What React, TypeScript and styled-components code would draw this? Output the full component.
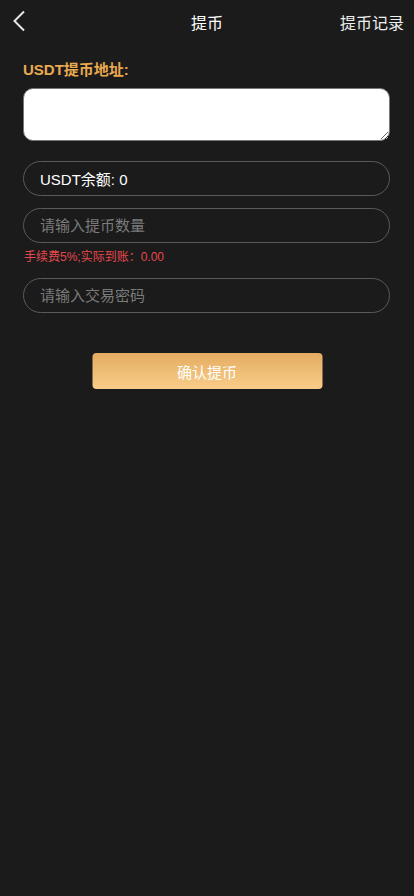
import React, { useState } from 'react';
import styled, { createGlobalStyle } from 'styled-components';

const GlobalStyle = createGlobalStyle`
  html, body {
    margin: 0;
    padding: 0;
    background-color: #1b1b1b;
  }
  body {
    font-family: "Liberation Sans", Arial, "Noto Sans CJK SC", sans-serif;
  }
  * {
    box-sizing: border-box;
  }
`;

const App = () => {
  const [amount, setAmount] = useState('');
  const fee = amount ? (Number(amount) * 0.95).toFixed(2) : '0.00';

  return (
    <Wrapper>
      <GlobalStyle />
      <Header>
        <BackBtn>
          <svg width="14" height="22" viewBox="0 0 14 22">
            <path d="M12 1.5 L2.5 11 L12 20.5" fill="none" stroke="#e6e6e6" strokeWidth="2" />
          </svg>
        </BackBtn>
        <Title>提币</Title>
        <Record>提币记录</Record>
      </Header>

      <Content>
        <Label>USDT提币地址:</Label>
        <Address />

        <Pill>
          <span>USDT余额: 0</span>
        </Pill>
        <InputPill
          placeholder="请输入提币数量"
          value={amount}
          onChange={(e) => setAmount(e.target.value)}
        />
        <FeeText>手续费5%;实际到账：{fee}</FeeText>
        <InputPill type="password" placeholder="请输入交易密码" />

        <SubmitBtn>确认提币</SubmitBtn>
      </Content>
    </Wrapper>
  );
};

const Wrapper = styled.div`
  width: 100%;
  min-height: 896px;
  background-color: #1b1b1b;
  color: #fff;
`;

const Header = styled.div`
  height: 44px;
  display: flex;
  align-items: center;
  justify-content: space-between;
  position: relative;
  padding: 0 10px 0 12px;
`;

const BackBtn = styled.div`
  width: 20px;
  height: 24px;
  display: flex;
  align-items: center;
  margin-top: -2px;
`;

const Title = styled.div`
  position: absolute;
  left: 50%;
  transform: translateX(-50%);
  font-size: 16px;
  color: #fff;
`;

const Record = styled.div`
  font-size: 16px;
  color: #eee;
`;

const Content = styled.div`
  padding: 16px 24px 0 23px;
  display: flex;
  flex-direction: column;
`;

const Label = styled.div`
  font-size: 15px;
  font-weight: bold;
  color: #e9a94f;
  line-height: 20px;
`;

const Address = styled.textarea`
  margin-top: 8px;
  width: 100%;
  height: 53px;
  border-radius: 10px;
  border: 1px solid #777;
  background: #fff;
  outline: none;
  padding: 8px 12px;
  font-size: 14px;
  font-family: inherit;
`;

const Pill = styled.div`
  margin-top: 20px;
  height: 35px;
  border: 1px solid #5a5a5a;
  border-radius: 18px;
  display: flex;
  align-items: center;
  padding: 0 16px;
  font-size: 15px;
  color: #fff;
`;

const InputPill = styled.input`
  margin-top: 12px;
  height: 35px;
  width: 100%;
  border: 1px solid #5a5a5a;
  border-radius: 18px;
  background: transparent;
  padding: 0 16px;
  font-size: 15px;
  color: #fff;
  outline: none;
  font-family: inherit;

  &::placeholder {
    color: #7a7a7a;
  }
`;

const FeeText = styled.div`
  margin-top: 7px;
  margin-bottom: 2px;
  padding-left: 1px;
  font-size: 12px;
  line-height: 14px;
  color: #e5484d;
`;

const SubmitBtn = styled.button`
  margin: 40px auto 0;
  width: 230px;
  height: 36px;
  border: none;
  border-radius: 4px;
  background: linear-gradient(180deg, #e4ac60 0%, #f9cd8a 100%);
  color: #fff;
  font-size: 15px;
  font-family: inherit;
  cursor: pointer;
  transform: translateX(0.5px);
`;

export default App;
